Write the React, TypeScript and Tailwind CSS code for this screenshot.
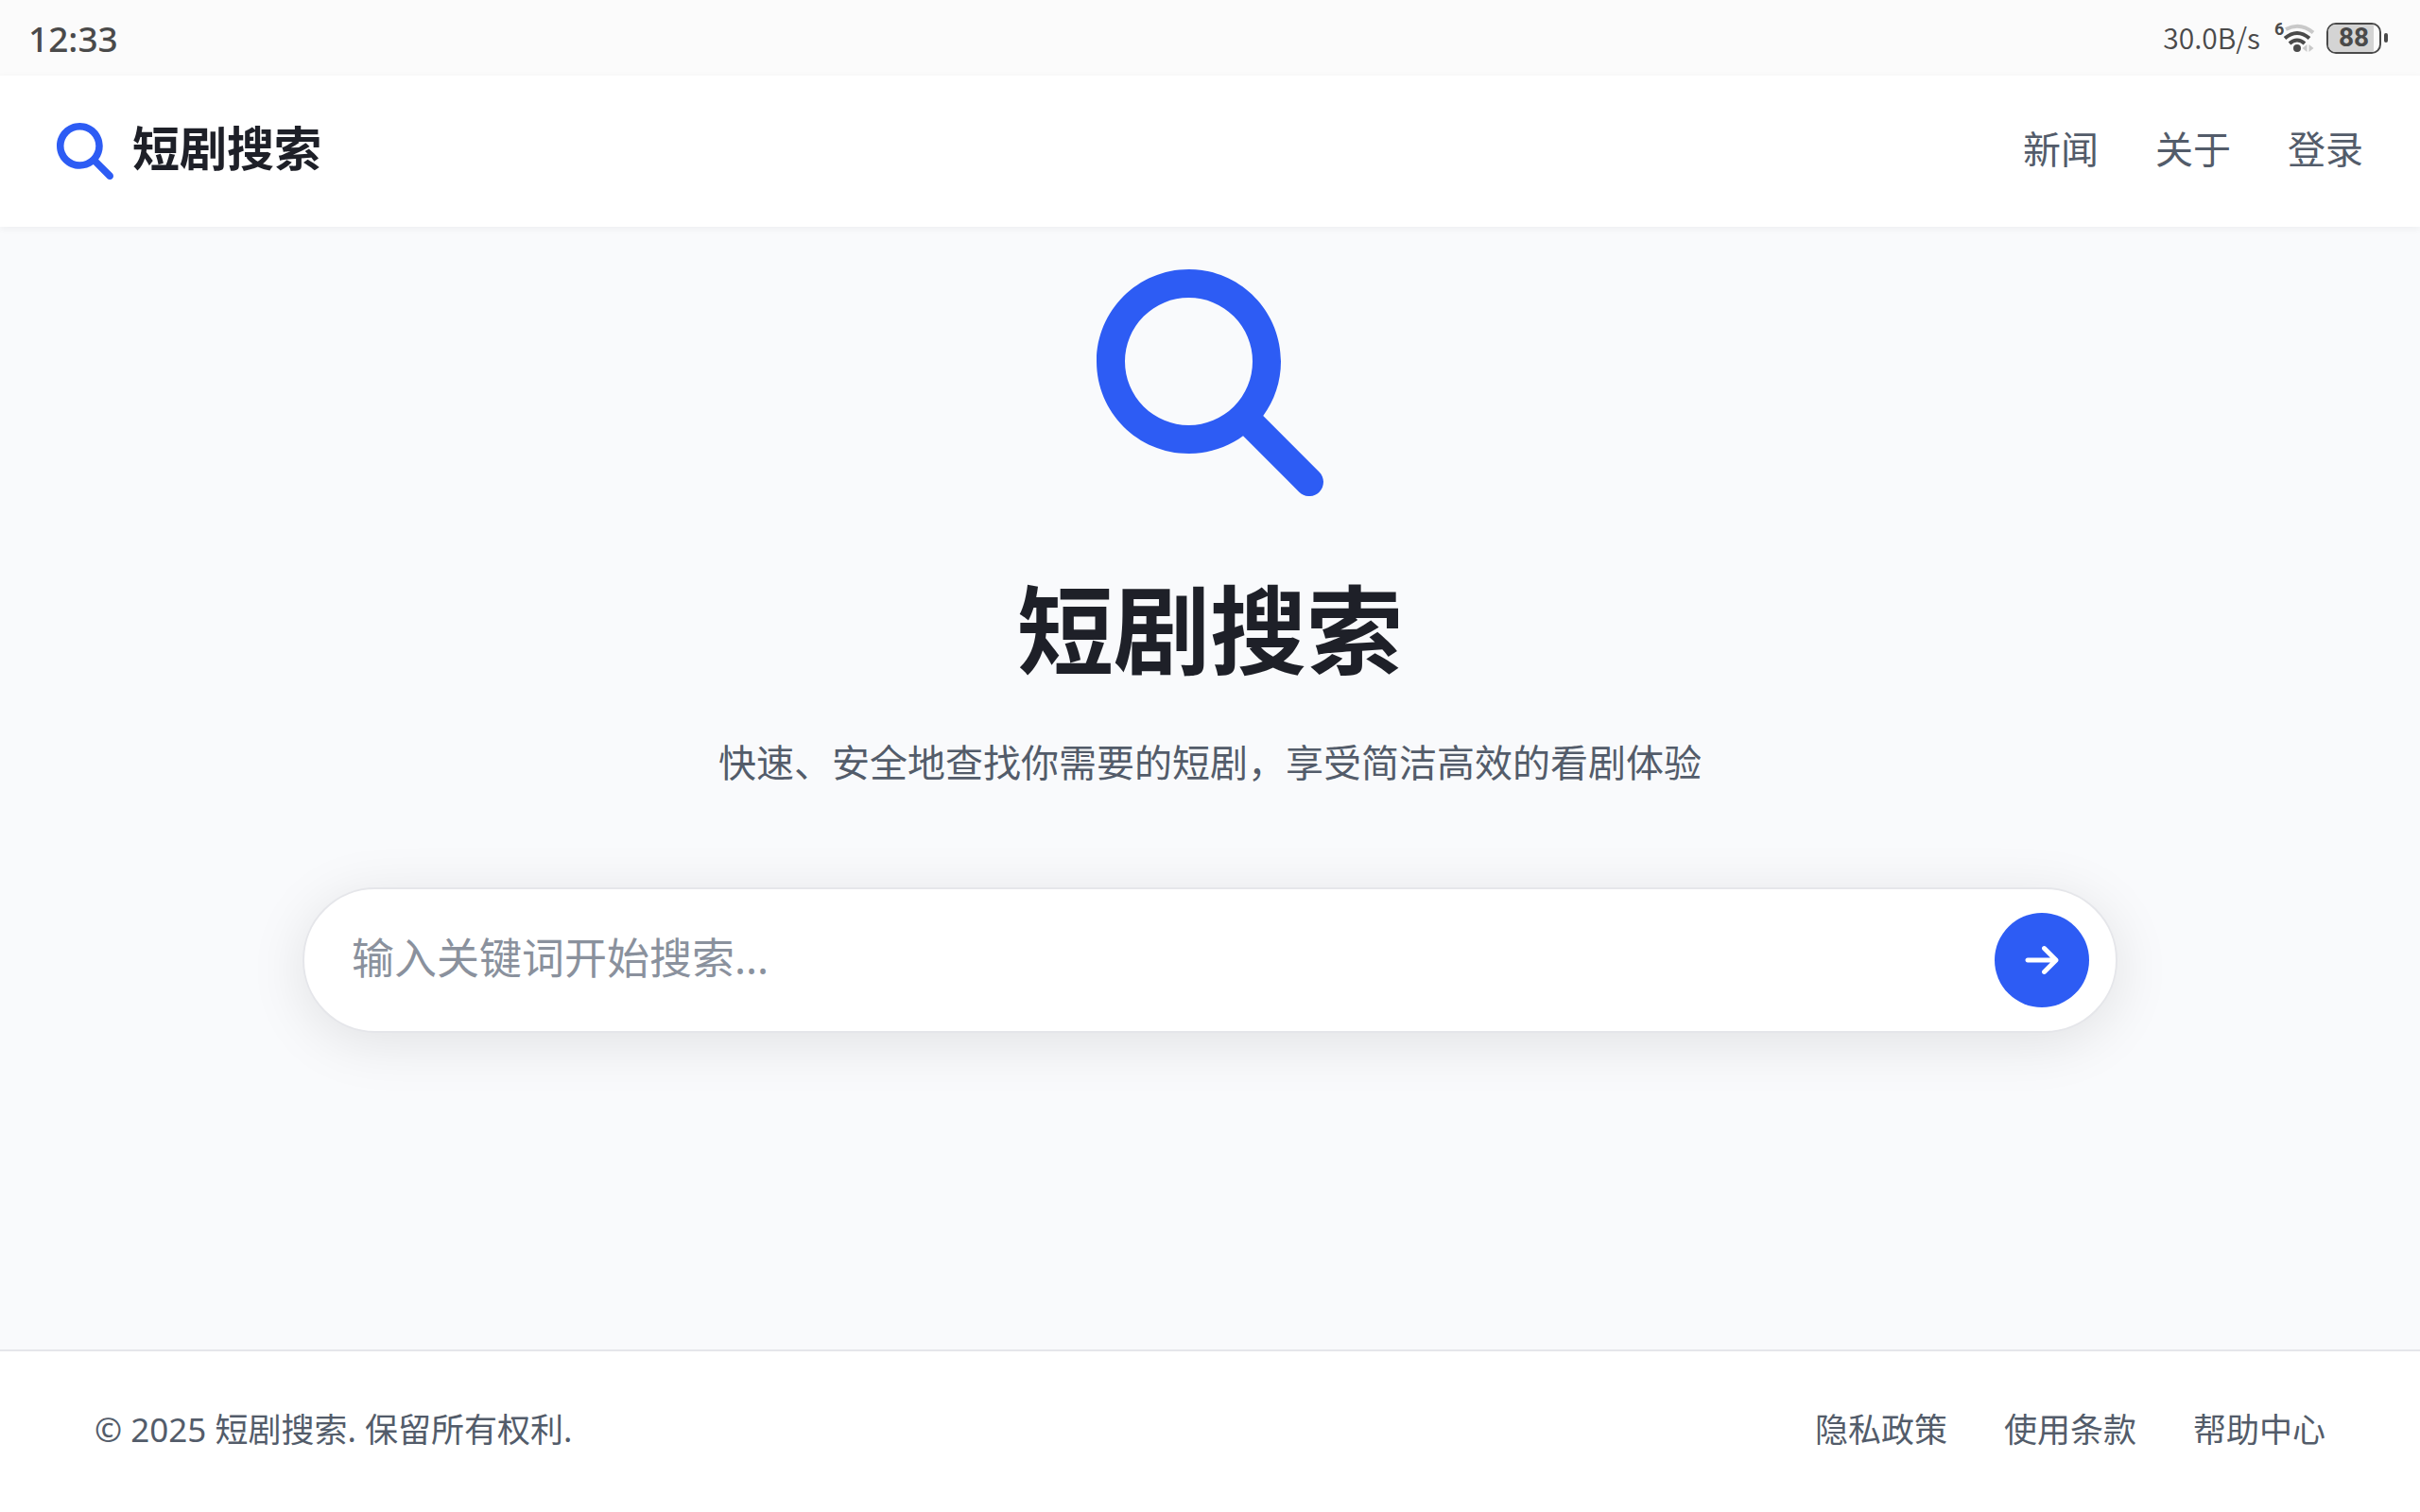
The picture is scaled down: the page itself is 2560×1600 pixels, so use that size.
import React from 'react';
import { FaMagnifyingGlass, FaArrowRight } from 'react-icons/fa6';

const navLinks = ['新闻', '关于', '登录'];
const footerLinks = ['隐私政策', '使用条款', '帮助中心'];

const WifiIcon: React.FC = () => (
  <svg viewBox="0 -8 44 50" className="w-11 h-[50px]" fill="none" aria-hidden="true">
    <text x="0" y="14" fontSize="18" fontWeight="700" fill="#4a4a4a" fontFamily="Roboto, sans-serif">6</text>
    <path d="M12 8Q27 0 41 11.5" stroke="#c9c9c9" strokeWidth="4" />
    <path d="M11 17.5Q24 6.5 37 17.5" stroke="#4a4a4a" strokeWidth="4" />
    <path d="M16 23Q24 16 32 23" stroke="#4a4a4a" strokeWidth="4" />
    <circle cx="24" cy="28" r="4" fill="#4a4a4a" />
    <path d="M34.5 24v8l-5-4zM36.5 24v8l5-4z" fill="#c9c9c9" />
  </svg>
);

const Battery: React.FC<{ level: number }> = ({ level }) => (
  <div className="flex items-center gap-[3px]">
    <div className="relative w-[58px] h-[33px] rounded-[10px] border-2 border-[#4a4a4a] flex items-center justify-center">
      <div className="absolute inset-y-0 left-0 rounded-l-lg bg-[#d4d4d4]" style={{ width: `${level}%` }} />
      <span className="relative font-['Roboto',sans-serif] text-[28px] leading-none font-bold">{level}</span>
    </div>
    <div className="w-1 h-[10px] rounded-xs bg-[#4a4a4a]" />
  </div>
);

const StatusBar: React.FC = () => (
  <div className="h-20 shrink-0 bg-[#fbfbfb] text-[#4a4a4a] flex items-center justify-between pl-[30px] pr-[34px]">
    <span className="font-['Noto_Sans',sans-serif] text-[37px] leading-none font-medium">12:33</span>
    <div className="flex items-center">
      <span className="text-[30px] leading-none font-[350] pb-0.5 mr-[15px]">30.0B/s</span>
      <WifiIcon />
      <div className="ml-[11px]">
        <Battery level={88} />
      </div>
    </div>
  </div>
);

export default function App() {
  return (
    <div className="min-h-screen flex flex-col bg-[#f9fafc] font-['Noto_Sans_CJK_SC',sans-serif]" lang="zh-CN">
      <StatusBar />

      <header className="relative h-40 shrink-0 bg-white shadow-[0_2px_8px_rgba(0,0,0,0.05)] flex items-center justify-between px-[60px]">
        <a href="#" className="flex items-center gap-5 text-[#1e2028]">
          <FaMagnifyingGlass className="w-[60px] h-[60px] text-[#2d5cf4]" />
          <span className="pb-3 text-[50px] leading-none font-bold">短剧搜索</span>
        </a>
        <nav className="flex gap-[60px] pb-2 text-[40px] leading-none text-[#535c6a]">
          {navLinks.map((label) => (
            <a key={label} href="#">
              {label}
            </a>
          ))}
        </nav>
      </header>

      {/* Hero with search box */}
      <main className="flex-1 flex flex-col items-center px-[60px] pt-[45px]">
        <FaMagnifyingGlass className="w-60 h-60 text-[#2d5cf4]" />
        <h1 className="mt-[62px] text-[102px] leading-[150px] font-bold text-[#1e2028]">短剧搜索</h1>
        <p className="mt-[38px] text-[40px] leading-[60px] text-[#535c6a]">快速、安全地查找你需要的短剧，享受简洁高效的看剧体验</p>
        <form
          className="mt-26 w-full max-w-[1920px] h-[154px] flex items-center rounded-full bg-white border-2 border-[#e5e6ea] shadow-[0_10px_60px_rgba(0,0,0,0.1)] pl-[50px] pr-7"
          onSubmit={(e) => e.preventDefault()}
        >
          <input
            type="text"
            aria-label="搜索"
            placeholder="输入关键词开始搜索..."
            className="flex-1 min-w-0 pb-1 font-['Noto_Sans','Noto_Sans_CJK_SC',sans-serif] text-[45px] leading-[68px] text-[#1e2028] placeholder:text-[#8a919d] bg-transparent outline-none"
          />
          <button
            type="submit"
            aria-label="开始搜索"
            className="w-25 h-25 rounded-full bg-[#2d5cf4] text-white flex items-center justify-center"
          >
            <FaArrowRight className="w-10 h-10" />
          </button>
        </form>
      </main>

      <footer className="h-[172px] shrink-0 bg-white border-t-2 border-[#e5e6ea] font-['Noto_Sans','Noto_Sans_CJK_SC',sans-serif] text-[#535c6a] text-[35px] leading-none flex items-center justify-between px-25 pb-1.5">
        <p>© 2025 短剧搜索. 保留所有权利.</p>
        <div className="flex gap-[60px]">
          {footerLinks.map((label) => (
            <a key={label} href="#">
              {label}
            </a>
          ))}
        </div>
      </footer>
    </div>
  );
}
